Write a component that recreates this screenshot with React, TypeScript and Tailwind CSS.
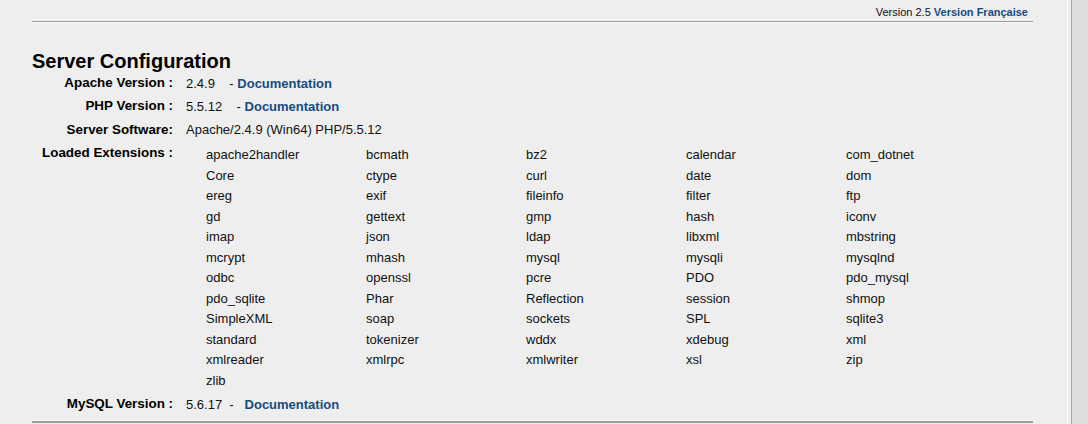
const extensions = [
  "apache2handler", "bcmath", "bz2", "calendar", "com_dotnet",
  "Core", "ctype", "curl", "date", "dom",
  "ereg", "exif", "fileinfo", "filter", "ftp",
  "gd", "gettext", "gmp", "hash", "iconv",
  "imap", "json", "ldap", "libxml", "mbstring",
  "mcrypt", "mhash", "mysql", "mysqli", "mysqlnd",
  "odbc", "openssl", "pcre", "PDO", "pdo_mysql",
  "pdo_sqlite", "Phar", "Reflection", "session", "shmop",
  "SimpleXML", "soap", "sockets", "SPL", "sqlite3",
  "standard", "tokenizer", "wddx", "xdebug", "xml",
  "xmlreader", "xmlrpc", "xmlwriter", "xsl", "zip",
  "zlib",
];

function Label({ children }: { children: React.ReactNode }) {
  return <div className="text-right font-bold text-[13.4px] text-black">{children}</div>;
}

function DocLink() {
  return <a href="#" className="font-bold text-[#174b80] no-underline">Documentation</a>;
}

export default function App() {
  return (
    <div className="flex h-[424px] w-[1088px] overflow-hidden bg-[#eeeeee] font-['Liberation_Sans',Arial,sans-serif] text-[13px] text-[#111]">
      <div className="w-[1067px] shrink-0">
        <div className="ml-[32px] w-[1001px]">
          {/* header line */}
          <div className="flex h-[22px] items-center justify-end border-b border-[#9a9a9a] pr-[5px] pt-[4px] text-[11px] shadow-[0_1px_0_#fafafa]">
            <span>Version 2.5&nbsp;</span>
            <a href="#" className="font-bold text-[#174b80]">Version Française</a>
          </div>

          <h2 className="mt-[28px] h-[22px] text-[20px] font-bold leading-[22px] text-black">Server Configuration</h2>

          <div className="grid grid-cols-[141px_1fr] gap-x-[13px]">
            <div className="flex h-[23px] items-center justify-end"><Label>Apache Version :</Label></div>
            <div className="flex h-[23px] items-center">2.4.9&nbsp;&nbsp;&nbsp; -&nbsp;<DocLink /></div>

            <div className="flex h-[23px] items-center justify-end"><Label>PHP Version :</Label></div>
            <div className="flex h-[23px] items-center">5.5.12&nbsp;&nbsp;&nbsp; -&nbsp;<DocLink /></div>

            <div className="flex h-[24px] items-center justify-end"><Label>Server Software:</Label></div>
            <div className="flex h-[24px] items-center">Apache/2.4.9 (Win64) PHP/5.5.12</div>

            <div className="flex h-[22px] items-center justify-end"><Label>Loaded Extensions :</Label></div>
            <div className="grid grid-cols-[160px_160px_160px_160px_160px] pl-[20px] pt-[3px]">
              {extensions.map((ext) => (
                <div key={ext} className="h-[20.5px] leading-[20.5px]">{ext}</div>
              ))}
            </div>

            <div className="mt-[2px] flex h-[23px] items-center justify-end"><Label>MySQL Version :</Label></div>
            <div className="mt-[2px] flex h-[23px] items-center">5.6.17&nbsp;&nbsp;-&nbsp;&nbsp;&nbsp;<DocLink /></div>
          </div>

          <div className="mt-[4px] border-t border-[#fafafa]">
            <div className="border-t-2 border-[#9a9a9a]" />
          </div>
        </div>
      </div>
      <div className="w-[4px] shrink-0 border-l border-[#fbfbfb]" />
      <div className="flex-1 border-l border-[#a8a8a8] bg-[#dddddd]" />
    </div>
  );
}
